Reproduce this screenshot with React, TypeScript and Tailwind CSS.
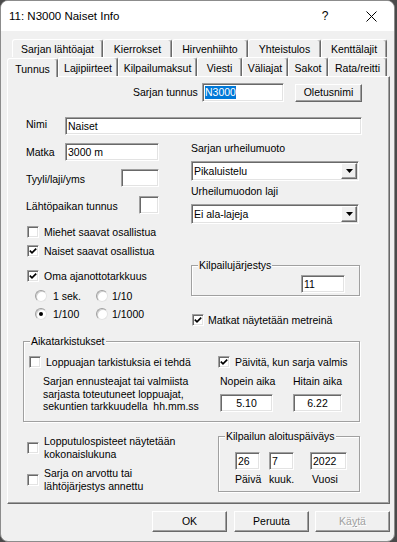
import React from "react";

// classic win32 3d edges
const sunken =
  "border border-t-[#a0a0a0] border-l-[#a0a0a0] border-b-white border-r-white shadow-[inset_1px_1px_0_#696969,inset_-1px_-1px_0_#e3e3e3]";
const raised =
  "border border-t-white border-l-white border-b-[#696969] border-r-[#696969] shadow-[inset_-1px_-1px_0_#a0a0a0]";

function Field({
  className,
  center,
  children,
}: {
  className: string;
  center?: boolean;
  children?: React.ReactNode;
}) {
  return (
    <div
      className={`${sunken} bg-white flex items-center px-[2px] shrink-0 ${
        center ? "justify-center" : ""
      } ${className}`}
    >
      {children}
    </div>
  );
}

function Check({ checked }: { checked?: boolean }) {
  return (
    <span
      className={`w-[12px] h-[12px] shrink-0 bg-white ${sunken} flex items-center justify-center`}
    >
      {checked && (
        <svg width="8" height="8" viewBox="0 0 8 8">
          <path d="M0.8 3.6 L3 5.8 L7.2 1.6" stroke="black" strokeWidth="1.7" fill="none" />
        </svg>
      )}
    </span>
  );
}

function Radio({ checked }: { checked?: boolean }) {
  return (
    <span className="w-[12px] h-[12px] shrink-0 rounded-full bg-white border border-t-[#a0a0a0] border-l-[#a0a0a0] border-b-[#e3e3e3] border-r-[#e3e3e3] shadow-[inset_1px_1px_0_#d0d0d0] flex items-center justify-center">
      {checked && <span className="w-[4px] h-[4px] rounded-full bg-black" />}
    </span>
  );
}

function Combo({ value }: { value: string }) {
  return (
    <div className={`w-[168px] h-[20px] ${sunken} bg-white flex items-center pl-[2px] pr-[1px]`}>
      <span className="flex-1">{value}</span>
      <span className={`w-[16px] h-[16px] bg-[#f0f0f0] ${raised} flex items-center justify-center`}>
        <svg width="7" height="4" viewBox="0 0 7 4">
          <path d="M0 0 H7 L3.5 4 Z" fill="black" />
        </svg>
      </span>
    </div>
  );
}

function Group({
  title,
  className,
  children,
}: {
  title: string;
  className: string;
  children?: React.ReactNode;
}) {
  return (
    <fieldset
      className={`border border-[#a0a0a0] shadow-[inset_1px_1px_0_#fff,1px_1px_0_#fff] shrink-0 ${className}`}
    >
      <legend className="ml-[6px] px-[1px] bg-[#f0f0f0] leading-[13px]">{title}</legend>
      {children}
    </fieldset>
  );
}

function Button({ className, children }: { className: string; children: React.ReactNode }) {
  return (
    <div className={`${raised} bg-[#f0f0f0] flex items-center justify-center shrink-0 ${className}`}>
      {children}
    </div>
  );
}

const backTabs = [
  { label: "Sarjan lähtöajat", w: "w-[91px]" },
  { label: "Kierrokset", w: "w-[69px]" },
  { label: "Hirvenhiihto", w: "w-[76px]" },
  { label: "Yhteistulos", w: "w-[73px]" },
  { label: "Kenttälajit", w: "w-[66px]" },
];

const frontTabs = [
  { label: "Lajipiirteet", w: "w-[60px]" },
  { label: "Kilpailumaksut", w: "w-[79px]" },
  { label: "Viesti", w: "w-[45px]" },
  { label: "Väliajat", w: "w-[46px]" },
  { label: "Sakot", w: "w-[40px]" },
  { label: "Rata/reitti", w: "w-[59px]" },
];

const tabCls =
  "h-full flex items-center justify-center pt-[2px] bg-[#f0f0f0] border-l border-t border-r border-l-white border-t-white border-r-[#696969] rounded-t-[3px] shadow-[inset_-1px_0_0_#a0a0a0] shrink-0";

export default function App() {
  return (
    <div className="w-[397px] h-[542px] bg-[#4a4a4a] [font-family:'Liberation_Sans',Arial,sans-serif] text-[10.5px] leading-[13px] text-black">
      <div className="w-[395px] h-[542px] bg-[#f0f0f0] border border-[#8c8c8c] rounded-[8px] overflow-hidden flex flex-col">
        {/* Title bar */}
        <div className="h-[30px] bg-white flex items-center shrink-0">
          <span className="ml-[8px] text-[11.5px]">11: N3000 Naiset Info</span>
          <span className="ml-auto w-[46px] flex justify-center text-[12px]">?</span>
          <span className="w-[46px] flex justify-center">
            <svg width="11" height="11" viewBox="0 0 11 11">
              <path d="M0.5 0.5 L10.5 10.5 M10.5 0.5 L0.5 10.5" stroke="black" strokeWidth="1" />
            </svg>
          </span>
        </div>

        {/* Tabs */}
        <div className="mt-[8px] ml-[11px] h-[18px] flex">
          {backTabs.map((t) => (
            <div key={t.label} className={`${tabCls} ${t.w}`}>
              {t.label}
            </div>
          ))}
        </div>
        <div className="ml-[6px] h-[19px] flex items-end">
          <div className={`${tabCls} w-[51px] h-[22px] -mb-[1px] relative z-10 pt-0`}>Tunnus</div>
          {frontTabs.map((t) => (
            <div key={t.label} className={`${tabCls} ${t.w}`}>
              {t.label}
            </div>
          ))}
        </div>

        {/* Tab panel */}
        <div className="ml-[6px] w-[383px] h-[428px] shrink-0 bg-[#f0f0f0] border border-t-white border-l-white border-r-[#696969] border-b-[#696969] shadow-[inset_-1px_-1px_0_#a0a0a0] flex flex-col">
          <div className="mt-[6px] h-[19px] pl-[125px] flex items-center">
            <span className="w-[69px] shrink-0">Sarjan tunnus</span>
            <Field className="w-[82px] h-[19px]">
              <span className="bg-[#0078d7] text-white leading-[13px]">N3000</span>
            </Field>
            <Button className="ml-[11px] w-[67px] h-[18px]">Oletusnimi</Button>
          </div>

          <div className="mt-[15px] h-[18px] pl-[18px] flex items-center">
            <span className="w-[39px] mb-[3px] shrink-0">Nimi</span>
            <Field className="w-[297px] h-[18px]">Naiset</Field>
          </div>

          {/* two columns */}
          <div className="flex pl-[18px]">
            <div className="w-[165px] flex flex-col shrink-0">
              <div className="mt-[8px] h-[18px] w-[133px] flex items-center">
                <span className="w-[39px] shrink-0">Matka</span>
                <Field className="w-[94px] h-[18px]">3000 m</Field>
              </div>
              <div className="mt-[8px] h-[18px] w-[133px] flex items-center justify-between">
                <span className="mt-[3px]">Tyyli/laji/yms</span>
                <Field className="w-[38px] h-[18px]" />
              </div>
              <div className="mt-[9px] h-[18px] w-[133px] flex items-center justify-between">
                <span className="mt-[2px]">Lähtöpaikan tunnus</span>
                <Field className="w-[20px] h-[18px]" />
              </div>
              <div className="mt-[12px] h-[12px] pl-[1px] flex items-center gap-[5px]">
                <Check />
                <span>Miehet saavat osallistua</span>
              </div>
              <div className="mt-[7px] h-[12px] pl-[1px] flex items-center gap-[5px]">
                <Check checked />
                <span>Naiset saavat osallistua</span>
              </div>
              <div className="mt-[13px] h-[12px] pl-[1px] flex items-center gap-[5px]">
                <Check checked />
                <span>Oma ajanottotarkkuus</span>
              </div>
              <div className="mt-[8px] h-[12px] pl-[9px] flex items-center">
                <div className="w-[61px] flex items-center gap-[6px]">
                  <Radio />
                  <span>1 sek.</span>
                </div>
                <div className="flex items-center gap-[4px]">
                  <Radio />
                  <span>1/10</span>
                </div>
              </div>
              <div className="mt-[6px] h-[12px] pl-[9px] flex items-center">
                <div className="w-[61px] flex items-center gap-[6px]">
                  <Radio checked />
                  <span>1/100</span>
                </div>
                <div className="flex items-center gap-[4px]">
                  <Radio />
                  <span>1/1000</span>
                </div>
              </div>
            </div>

            <div className="w-[169px] flex flex-col shrink-0">
              <span className="mt-[7px]">Sarjan urheilumuoto</span>
              <div className="mt-[6px]">
                <Combo value="Pikaluistelu" />
              </div>
              <span className="mt-[4px]">Urheilumuodon laji</span>
              <div className="mt-[6px]">
                <Combo value="Ei ala-lajeja" />
              </div>
              <Group title="Kilpailujärjestys" className="mt-[35px] w-[169px] h-[37px]">
                <div className="mt-[3px] pr-[14px] flex justify-end">
                  <Field className="w-[44px] h-[18px]">11</Field>
                </div>
              </Group>
              <div className="mt-[18px] h-[12px] pl-[1px] flex items-center gap-[4px]">
                <Check checked />
                <span>Matkat näytetään metreinä</span>
              </div>
            </div>
          </div>

          {/* Aikatarkistukset */}
          <Group title="Aikatarkistukset" className="mt-[9px] ml-[15px] w-[337px] h-[87px]">
            <div className="mt-[8px] h-[12px] pl-[5px] flex items-center">
              <div className="w-[189px] flex items-center gap-[5px] shrink-0">
                <Check />
                <span>Loppuajan tarkistuksia ei tehdä</span>
              </div>
              <div className="flex items-center gap-[5px]">
                <Check checked />
                <span>Päivitä, kun sarja valmis</span>
              </div>
            </div>
            <div className="mt-[7px] flex">
              <div className="ml-[19px] w-[177px] leading-[12.5px] whitespace-pre shrink-0">
                {"Sarjan ennusteajat tai valmiista\nsarjasta toteutuneet loppuajat,\nsekuntien tarkkuudella  hh.mm.ss"}
              </div>
              <div className="w-[73px] flex flex-col shrink-0">
                <span className="leading-[12.5px]">Nopein aika</span>
                <Field center className="mt-[6.5px] w-[53px] h-[18px]">
                  5.10
                </Field>
              </div>
              <div className="flex flex-col">
                <span className="leading-[12.5px]">Hitain aika</span>
                <Field center className="mt-[6.5px] w-[49px] h-[18px]">
                  6.22
                </Field>
              </div>
            </div>
          </Group>

          {/* bottom area */}
          <div className="mt-[8px] flex">
            <div className="ml-[19px] w-[191px] flex flex-col shrink-0">
              <div className="mt-[5px] flex items-center gap-[5px]">
                <Check />
                <div className="leading-[12.5px]">
                  Lopputulospisteet näytetään
                  <br />
                  kokonaislukuna
                </div>
              </div>
              <div className="mt-[7px] flex items-center gap-[5px]">
                <Check />
                <div className="leading-[12.5px]">
                  Sarja on arvottu tai
                  <br />
                  lähtöjärjestys annettu
                </div>
              </div>
            </div>
            <Group title="Kilpailun aloituspäiväys" className="w-[142px] h-[62px]">
              <div className="mt-[9px] pl-[16px] flex">
                <div className="w-[34px] flex flex-col shrink-0">
                  <Field className="w-[25px] h-[18px]">26</Field>
                  <span className="mt-[2.5px]">Päivä</span>
                </div>
                <div className="w-[41px] flex flex-col shrink-0">
                  <Field className="w-[25px] h-[18px]">7</Field>
                  <span className="mt-[2.5px]">kuuk.</span>
                </div>
                <div className="flex flex-col">
                  <Field className="w-[37px] h-[18px]">2022</Field>
                  <span className="mt-[2.5px] ml-[2px]">Vuosi</span>
                </div>
              </div>
            </Group>
          </div>
        </div>

        {/* Dialog buttons */}
        <div className="mt-[7px] h-[21px] pl-[151px] flex">
          <Button className="w-[75px] h-[21px]">OK</Button>
          <Button className="ml-[7px] w-[75px] h-[21px]">Peruuta</Button>
          <Button className="ml-[6px] w-[75px] h-[21px] text-[#a0a0a0] [text-shadow:1px_1px_0_#fff]">
            Kä<span className="underline">y</span>tä
          </Button>
        </div>
      </div>
    </div>
  );
}
